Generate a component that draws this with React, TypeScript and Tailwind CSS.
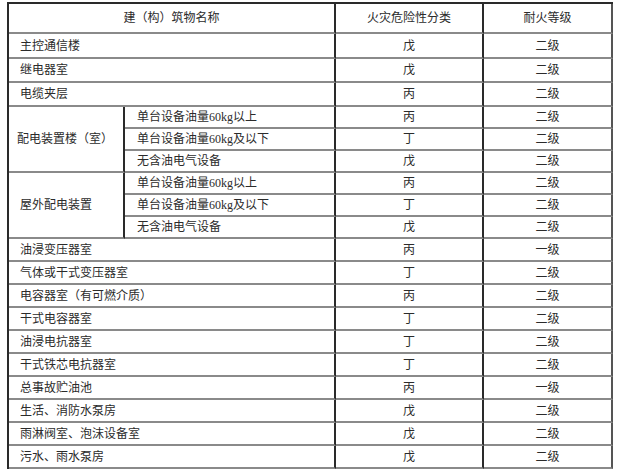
import React from "react";

type Row = { name: string; cls: string; grade: string };

const font = { fontFamily: '"Liberation Serif", "Noto Sans CJK SC", serif' };

const topRows: Row[] = [
  { name: "主控通信楼", cls: "戊", grade: "二级" },
  { name: "继电器室", cls: "戊", grade: "二级" },
  { name: "电缆夹层", cls: "丙", grade: "二级" },
];

const subRows: Row[] = [
  { name: "单台设备油量60kg以上", cls: "丙", grade: "二级" },
  { name: "单台设备油量60kg及以下", cls: "丁", grade: "二级" },
  { name: "无含油电气设备", cls: "戊", grade: "二级" },
];

const outdoorRows: Row[] = [
  { name: "单台设备油量60kg以上", cls: "丙", grade: "二级" },
  { name: "单台设备油量60kg及以下", cls: "丁", grade: "二级" },
  { name: "无含油电气设备", cls: "戊", grade: "二级" },
];

const bottomRows: Row[] = [
  { name: "油浸变压器室", cls: "丙", grade: "一级" },
  { name: "气体或干式变压器室", cls: "丁", grade: "二级" },
  { name: "电容器室（有可燃介质）", cls: "丙", grade: "二级" },
  { name: "干式电容器室", cls: "丁", grade: "二级" },
  { name: "油浸电抗器室", cls: "丁", grade: "二级" },
  { name: "干式铁芯电抗器室", cls: "丁", grade: "二级" },
  { name: "总事故贮油池", cls: "丙", grade: "一级" },
  { name: "生活、消防水泵房", cls: "戊", grade: "二级" },
  { name: "雨淋阀室、泡沫设备室", cls: "戊", grade: "二级" },
  { name: "污水、雨水泵房", cls: "戊", grade: "二级" },
];

const cell = "flex items-center border-r-2 border-b-2 border-r-[#2a2a2a] border-b-[#8a8a8a]";

function ValueCells({ row, last }: { row: Row; last?: boolean }) {
  const bottom = last ? "border-b-[#2a2a2a]" : "";
  return (
    <>
      <div className={`${cell} ${bottom} justify-center`}>{row.cls}</div>
      <div className={`${cell} ${bottom} justify-center border-r-[#555]`}>{row.grade}</div>
    </>
  );
}

export default function App() {
  return (
    <div className="w-[620px] h-[475px] bg-white pt-[2px] pl-[7px] text-[12px] text-[#2b2b2b]" style={font}>
      <div className="grid w-[606px] grid-cols-[116px_211px_148px_129px] grid-rows-[30px_25px_24px_24px_repeat(6,22px)_repeat(10,23px)] border-t-2 border-l-2 border-[#2a2a2a]">
        <div className={`${cell} col-span-2 justify-center`}>建（构）筑物名称</div>
        <div className={`${cell} justify-center`}>火灾危险性分类</div>
        <div className={`${cell} justify-center border-r-[#555]`}>耐火等级</div>

        {topRows.map((r) => (
          <React.Fragment key={r.name}>
            <div className={`${cell} col-span-2 pl-[11px]`}>{r.name}</div>
            <ValueCells row={r} />
          </React.Fragment>
        ))}

        <div className={`${cell} row-span-3 pl-[8px] border-b-[#2a2a2a]`}>配电装置楼（室）</div>
        {subRows.map((r, i) => (
          <React.Fragment key={"a" + i}>
            <div className={`${cell} pl-[12px]`}>{r.name}</div>
            <ValueCells row={r} />
          </React.Fragment>
        ))}

        <div className={`${cell} row-span-3 pl-[11px] border-b-[#2a2a2a]`}>屋外配电装置</div>
        {outdoorRows.map((r, i) => (
          <React.Fragment key={"b" + i}>
            <div className={`${cell} pl-[12px]`}>{r.name}</div>
            <ValueCells row={r} />
          </React.Fragment>
        ))}

        {bottomRows.map((r, i) => {
          const last = i === bottomRows.length - 1;
          return (
            <React.Fragment key={r.name}>
              <div className={`${cell} col-span-2 pl-[11px] ${last ? "border-b-[#2a2a2a]" : ""}`}>{r.name}</div>
              <ValueCells row={r} last={last} />
            </React.Fragment>
          );
        })}
      </div>
    </div>
  );
}
